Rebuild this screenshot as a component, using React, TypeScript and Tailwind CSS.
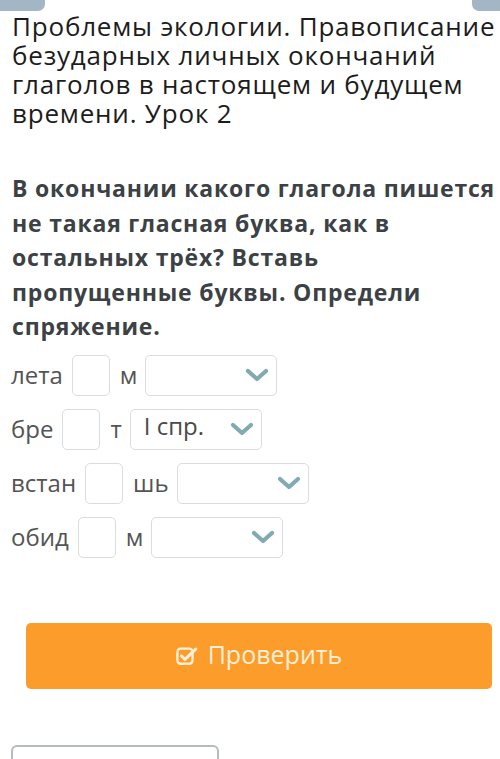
const rows = [
  { stem: "лета", end: "м", value: "" },
  { stem: "бре", end: "т", value: "I спр." },
  { stem: "встан", end: "шь", value: "" },
  { stem: "обид", end: "м", value: "" },
]

function CheckSquare() {
  return (
    <svg width="22" height="22" viewBox="0 0 24 24" fill="none" className="shrink-0">
      <rect x="1.5" y="4" width="16.5" height="16.5" rx="3.5" stroke="#fdeed6" strokeWidth="2.6" />
      <path d="M6 12l3.8 3.8L21.5 4.5" stroke="#fdeed6" strokeWidth="3.4" strokeLinecap="round" strokeLinejoin="round" />
    </svg>
  )
}

function Chevron() {
  return (
    <svg width="24" height="14" viewBox="0 0 24 14" fill="none" className="shrink-0">
      <path d="M3 3l9 8 9-8" stroke="#80abb1" strokeWidth="4.2" strokeLinecap="round" strokeLinejoin="round" />
    </svg>
  )
}

export default function App() {
  return (
    <div className="w-[500px] h-[759px] overflow-hidden bg-white font-['Open_Sans',sans-serif]">
      <div className="flex justify-between h-[11px]">
        <div className="w-[45px] h-[11px] bg-[#a3b6c6] rounded-br-[7px]" />
        <div className="w-[28px] h-[11px] bg-[#a3b6c6] rounded-bl-[7px]" />
      </div>

      <h1 className="px-3 mt-[1px] text-[26px] leading-[29px] text-[#1c1c1c] tracking-[0.8px] whitespace-nowrap">
        Проблемы экологии. Правописание
        <br />
        безударных личных окончаний
        <br />
        глаголов в настоящем и будущем
        <br />
        времени. Урок 2
      </h1>

      <p className="pl-3 mt-[43px] text-[23px] leading-[34.5px] font-bold text-[#3c4145] tracking-[0.8px] whitespace-nowrap">
        В окончании какого глагола пишется
        <br />
        не такая гласная буква, как в
        <br />
        остальных трёх? Вставь
        <br />
        пропущенные буквы. Определи
        <br />
        спряжение.
      </p>

      <div className="mt-[11px] flex flex-col gap-[13px] pl-[11px]">
        {rows.map((r) => (
          <div key={r.stem} className="flex items-center h-[41px] text-[24px] text-[#545454]">
            <span className="leading-none">{r.stem}</span>
            <div className="ml-[9px] w-[38px] h-[41px] border border-[#d9dddd] rounded-[5px] bg-white" />
            <span className="ml-[10px] leading-none">{r.end}</span>
            <div className="ml-[8px] w-[132px] h-[41px] border border-[#d9dddd] rounded-[5px] bg-white flex items-center justify-between pl-[13px] pr-[7px]">
              <span className="text-[24px] text-[#4a4a4a] leading-none -mt-[6px]">{r.value}</span>
              <Chevron />
            </div>
          </div>
        ))}
      </div>

      <div className="mt-[65px] ml-[26px] w-[466px] h-[66px] rounded-[5px] bg-[#fc9d2b] flex items-center justify-center gap-[10px]">
        <CheckSquare />
        <span className="text-[25px] text-[#fdeed6] leading-none -mt-[2px]">Проверить</span>
      </div>

      <div className="mt-[56px] ml-[11px] w-[208px] h-[40px] border-2 border-[#b4bcbf] rounded-[6px]" />
    </div>
  )
}
